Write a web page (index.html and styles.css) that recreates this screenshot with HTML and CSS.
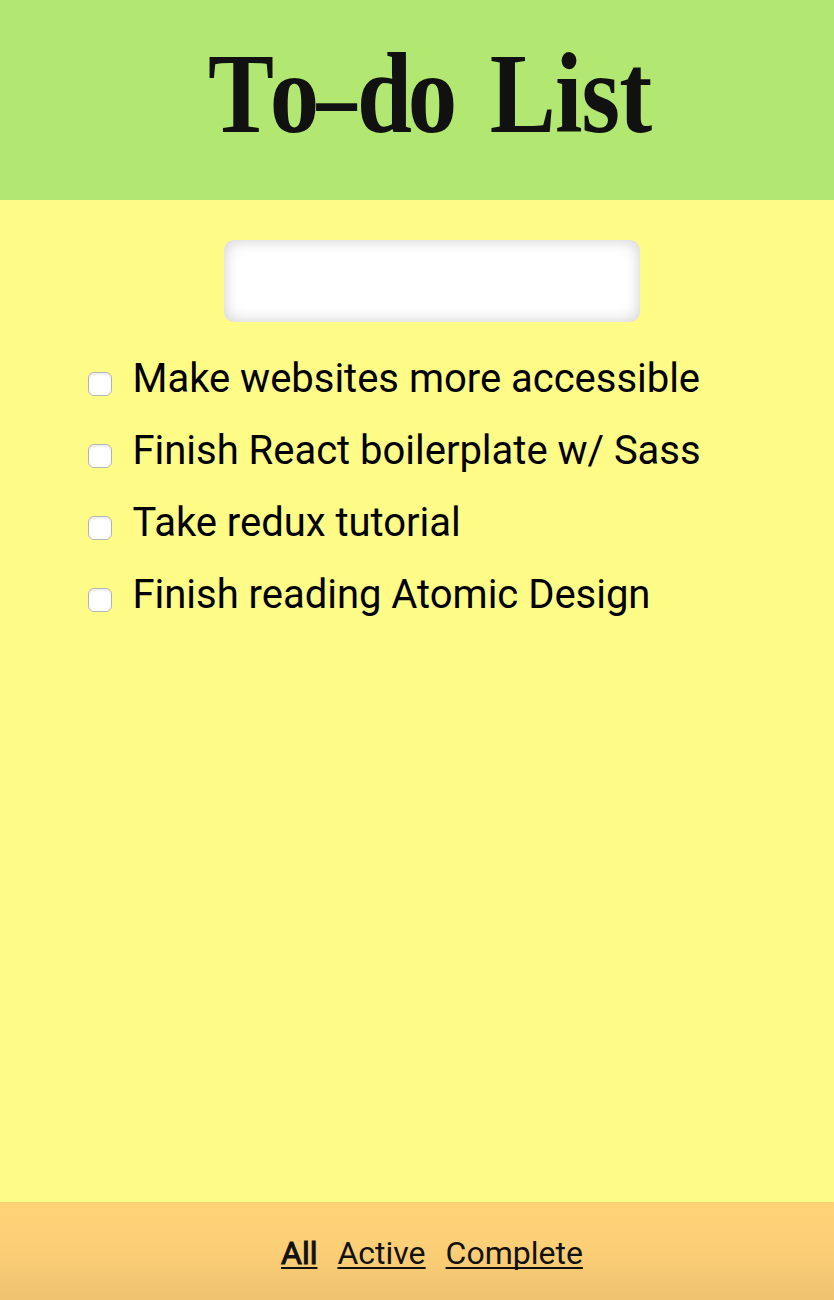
FILE: index.html
```html
<!DOCTYPE html>
<html lang="en">
<head>
<meta charset="utf-8">
<title>To-do List</title>
<link rel="stylesheet" href="styles.css">
</head>
<body>
<div class="app">
  <header class="header"><h1 class="title"><span class="word">To<span class="dash">-</span>do</span> <span class="word word-last">List</span></h1></header>
  <main class="main">
    <input class="new-item" type="text" aria-label="New to-do">
    <ul class="list">
      <li><label class="item"><input class="check" type="checkbox"><span>Make websites more accessible</span></label></li>
      <li><label class="item"><input class="check" type="checkbox"><span>Finish React boilerplate w/ Sass</span></label></li>
      <li><label class="item"><input class="check" type="checkbox"><span>Take redux tutorial</span></label></li>
      <li><label class="item"><input class="check" type="checkbox"><span>Finish reading Atomic Design</span></label></li>
    </ul>
  </main>
  <footer class="footer">
    <a class="filter current" href="#all">All</a>
    <a class="filter" href="#active">Active</a>
    <a class="filter" href="#complete">Complete</a>
  </footer>
</div>
</body>
</html>
```
FILE: styles.css
```css
* { box-sizing: border-box; }
body { margin: 0; font-family: Roboto, sans-serif; color: #000; }
.app { height: 1300px; display: flex; flex-direction: column; background: #fffb87; }
.header { height: 200px; flex: none; padding: 34px 0 0 208px; background: #b2e872; }
.title {
  display: flex;
  gap: 43px;
  width: 560px;
  margin: 0;
  font: bold 115px/120px "Liberation Serif", serif;
  font-kerning: none;
  letter-spacing: -5px;
  color: #111;
  transform: scaleX(.86);
  transform-origin: left;
}
.word { white-space: nowrap; }
.word-last { letter-spacing: -1px; }
.dash {
  display: inline-block;
  width: 49px;
  padding-left: 6px;
  transform: scale(1.6, .8);
  transform-origin: 50% 68%;
}
.main { flex: 1; padding: 40px 0 0; }
.new-item {
  display: block;
  width: 416px;
  height: 82px;
  margin: 0 0 0 224px;
  padding: 0 16px;
  border: 0;
  border-radius: 10px;
  background: #fff;
  box-shadow: inset 0 0 16px rgba(0, 0, 0, .2);
  font: 40px Roboto, sans-serif;
}
.list { margin: 21px 0 0; padding: 0 0 0 88px; list-style: none; }
.item { display: flex; gap: 20.5px; height: 72px; font-size: 40px; line-height: 72px; letter-spacing: -.02px; white-space: nowrap; }
.check {
  appearance: none;
  flex: none;
  width: 24px;
  height: 24px;
  margin: 29px 0 0;
  border: 1px solid #b5b5b5;
  border-radius: 6px;
  background: #fff;
  box-shadow: inset 0 2px 2px #eee;
}
.footer {
  height: 98px;
  flex: none;
  display: flex;
  gap: 20px;
  padding: 32px 0 0 281px;
  background: linear-gradient(#ffd277, #fdd077 40%, #efc36f);
}
.filter {
  height: 38px;
  font-size: 32px;
  line-height: 38px;
  color: #111;
  text-decoration: underline;
  text-decoration-thickness: 2px;
  text-underline-offset: 3px;
  text-decoration-skip-ink: none;
}
.current { -webkit-text-stroke: 1px #111; }
```
